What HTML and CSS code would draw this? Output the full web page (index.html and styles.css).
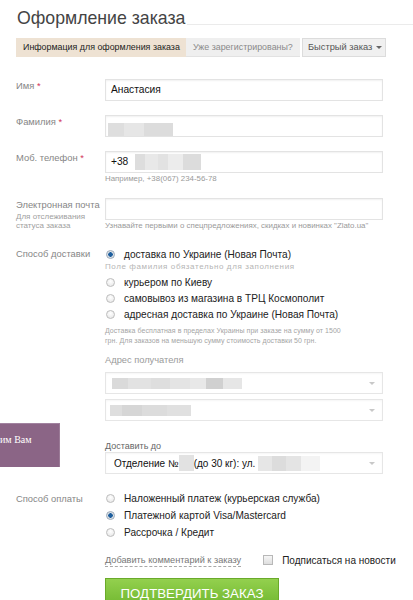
FILE: index.html
```html
<!DOCTYPE html>
<html lang="ru">
<head>
<meta charset="utf-8">
<title>Оформление заказа</title>
<link rel="stylesheet" href="styles.css">
</head>
<body>
<div class="page">
  <div class="title-row">
    <h1 class="title">Оформление заказа</h1>
    <span class="title-line"></span>
  </div>

  <div class="tabs">
    <div class="tab tab-active">Информация для оформления заказа</div>
    <div class="tab tab-login">Уже зарегистрированы?</div>
    <div class="tab tab-quick">Быстрый заказ <span class="caret"></span></div>
  </div>

  <div class="form">
    <div class="row">
      <div class="label">Имя <span class="req">*</span></div>
      <div class="field"><div class="input">Анастасия</div></div>
    </div>

    <div class="row">
      <div class="label">Фамилия <span class="req">*</span></div>
      <div class="field"><div class="input"><span class="blur blur-surname"></span></div></div>
    </div>

    <div class="row row-hint">
      <div class="label">Моб. телефон <span class="req">*</span></div>
      <div class="field">
        <div class="input">+38<span class="blur blur-phone"></span></div>
        <div class="hint">Например, +38(067) 234-56-78</div>
      </div>
    </div>

    <div class="row">
      <div class="label">Электронная почта<div class="sublabel">Для отслеживания<br>статуса заказа</div></div>
      <div class="field">
        <div class="input"></div>
        <div class="hint">Узнавайте первыми о спецпредложениях, скидках и новинках "Zlato.ua"</div>
      </div>
    </div>

    <div class="row row-delivery">
      <div class="label label-opt">Способ доставки</div>
      <div class="field">
        <div class="opt"><span class="radio checked"></span>доставка по Украине (Новая Почта)</div>
        <div class="opt-hint">Поле фамилия обязательно для заполнения</div>
        <div class="opt"><span class="radio"></span>курьером по Киеву</div>
        <div class="opt"><span class="radio"></span>самовывоз из магазина в ТРЦ Космополит</div>
        <div class="opt"><span class="radio"></span>адресная доставка по Украине (Новая Почта)</div>
        <div class="note">Доставка бесплатная в пределах Украины при заказе на сумму от 1500<br>грн. Для заказов на меньшую сумму стоимость доставки 50 грн.</div>

        <div class="sub-title">Адрес получателя</div>
        <div class="select"><span class="blur blur-city"></span><span class="arrow"></span></div>
        <div class="select select-second"><span class="blur blur-region"></span><span class="arrow"></span></div>

        <div class="deliver-label">Доставить до</div>
        <div class="select select-dark">Отделение №<span class="blur blur-num"></span> (до 30 кг): ул.<span class="blur blur-street"></span><span class="arrow"></span></div>
      </div>
    </div>

    <div class="row row-payment">
      <div class="label label-pay">Способ оплаты</div>
      <div class="field">
        <div class="opt opt-pay"><span class="radio"></span>Наложенный платеж (курьерская служба)</div>
        <div class="opt opt-pay"><span class="radio checked"></span>Платежной картой Visa/Mastercard</div>
        <div class="opt opt-pay"><span class="radio"></span>Рассрочка / Кредит</div>
      </div>
    </div>

    <div class="offset extras">
      <span class="comment-link">Добавить комментарий к заказу</span>
      <span class="checkbox"></span>
      <span class="subscribe">Подписаться на новости</span>
    </div>

    <div class="offset">
      <div class="submit">ПОДТВЕРДИТЬ ЗАКАЗ</div>
    </div>
  </div>
</div>

<div class="callback">им Вам</div>
</body>
</html>
```

FILE: styles.css
```css
html, body {
  margin: 0;
  padding: 0;
  background: #fff;
}

body {
  font-family: "Liberation Sans", Arial, sans-serif;
  color: #333;
  overflow: hidden;
  height: 600px;
}

.page {
  padding-left: 16px;
}

.title-row {
  display: flex;
  padding-top: 6px;
}

.title {
  margin: 0 0 0 1px;
  font-weight: normal;
  font-size: 17.7px;
  line-height: 24px;
  color: #444;
  white-space: nowrap;
}

.title-line {
  flex: 1;
  height: 1px;
  margin-top: 18px;
  margin-left: 2px;
  background: #ebebeb;
}

.tabs {
  display: flex;
  margin-top: 8px;
  height: 19px;
  font-size: 8.9px;
  line-height: 19px;
}

.tab {
  box-sizing: border-box;
  height: 19px;
  white-space: nowrap;
}

.tab-active {
  width: 170px;
  padding-left: 7px;
  background: #eee2d3;
  color: #222;
}

.tab-login {
  width: 114px;
  padding-left: 7px;
  background: #efefef;
  color: #8a8a8a;
  border-bottom: 1px solid #e2e2e2;
}

.tab-quick {
  width: 84px;
  margin-left: 2px;
  padding-left: 5px;
  background: #f0f0f0;
  color: #555;
  border: 1px solid #dcdcdc;
  line-height: 17px;
  font-size: 9.3px;
}

.caret {
  display: inline-block;
  width: 0;
  height: 0;
  border-left: 3px solid transparent;
  border-right: 3px solid transparent;
  border-top: 3px solid #666;
  vertical-align: middle;
  margin-left: 1px;
}

.form {
  margin-top: 22px;
}

.row {
  display: grid;
  grid-template-columns: 89px 278px;
  margin-bottom: 14px;
}

.row-hint {
  margin-bottom: 13px;
}

.label {
  font-size: 9.4px;
  line-height: 14px;
  color: #868686;
  white-space: nowrap;
}

.req {
  color: #d2335a;
}

.sublabel {
  font-size: 8px;
  line-height: 9px;
  color: #a0a0a0;
}

.input {
  box-sizing: border-box;
  height: 22px;
  border: 1px solid #e3e3e3;
  box-shadow: inset 0 1px 2px rgba(0, 0, 0, 0.06);
  padding: 0 5px;
  font-size: 10.2px;
  line-height: 20px;
  color: #111;
  display: flex;
  align-items: center;
}

.hint {
  font-size: 7.9px;
  line-height: 12px;
  color: #9a9a9a;
  white-space: nowrap;
}

.blur {
  display: inline-block;
  flex: none;
}

.blur-surname {
  width: 65px;
  height: 13px;
  margin-left: -3px;
  margin-top: 6px;
  background: linear-gradient(90deg, #dedede 0 25%, #e6e6e6 25% 55%, #dcdcdc 55% 100%);
}

.blur-phone {
  width: 66px;
  height: 16px;
  margin-left: 7px;
  background: linear-gradient(90deg, #dddddd 0 15%, #e8e8e8 15% 35%, #e2e2e2 35% 50%, #ececec 50% 72%, #dcdcdc 72% 100%);
}

.row-delivery {
  margin-bottom: 0;
}

.label-opt {
  line-height: 16px;
}

.opt {
  display: flex;
  align-items: center;
  height: 16px;
  font-size: 10.1px;
  color: #222;
  white-space: nowrap;
}

.opt-pay {
  height: 17px;
}

.radio {
  box-sizing: border-box;
  flex: none;
  width: 9px;
  height: 9px;
  margin-left: 1px;
  margin-right: 9px;
  border-radius: 50%;
  border: 1px solid #bdbdbd;
  background: radial-gradient(circle at 50% 35%, #ffffff 0, #e4e4e4 100%);
}

.radio.checked {
  border-color: #9aa9b8;
  background: radial-gradient(circle, #1e5f9e 0 2px, #d8dde3 2.5px, #f4f4f4 100%);
}

.opt-hint {
  font-size: 8px;
  line-height: 9px;
  letter-spacing: 0.6px;
  color: #b5b5b5;
  margin-bottom: 3px;
  white-space: nowrap;
}

.note {
  margin-top: 4px;
  font-size: 7px;
  line-height: 10px;
  letter-spacing: 0.05px;
  color: #a5a5a5;
  white-space: nowrap;
}

.sub-title {
  margin-top: 7px;
  font-size: 9.3px;
  line-height: 14px;
  color: #9a9a9a;
}

.select {
  box-sizing: border-box;
  height: 22px;
  margin-top: 5px;
  border: 1px solid #e6e6e6;
  box-shadow: inset 0 1px 2px rgba(0, 0, 0, 0.04);
  padding: 0 4px 0 6px;
  display: flex;
  align-items: center;
  font-size: 10px;
  color: #111;
  white-space: nowrap;
}

.arrow {
  margin-left: auto;
  margin-right: 3px;
  width: 0;
  height: 0;
  border-left: 3px solid transparent;
  border-right: 3px solid transparent;
  border-top: 3px solid #c8c8c8;
}

.blur-city {
  width: 130px;
  height: 11px;
  background: linear-gradient(90deg, #dadada 0 12%, #e2e2e2 12% 30%, #dedede 30% 45%, #e4e4e4 45% 60%, #e8e8e8 60% 72%, #d0d0d0 72% 85%, #e6e6e6 85% 100%);
}

.blur-region {
  width: 81px;
  height: 11px;
  margin-left: -2px;
  background: linear-gradient(90deg, #dedede 0 15%, #d6d6d6 15% 40%, #dcdcdc 40% 70%, #e0e0e0 70% 100%);
}

.deliver-label {
  margin-top: 19px;
  font-size: 9px;
  line-height: 12px;
  color: #666;
}

.select-dark {
  margin-top: 0;
  padding-left: 8px;
  font-size: 10px;
}

.blur-num {
  width: 15px;
  height: 16px;
  background: #e2e2e2;
}

.blur-street {
  width: 62px;
  height: 15px;
  margin-left: 3px;
  background: linear-gradient(90deg, #e6e6e6 0 22%, #dcdcdc 22% 45%, #e4e4e4 45% 70%, #f3f3f3 70% 100%);
}

.row-payment {
  margin-top: 16px;
  margin-bottom: 0;
}

.label-pay {
  line-height: 17px;
}

.offset {
  padding-left: 89px;
}

.extras {
  display: flex;
  align-items: center;
  margin-top: 12px;
  height: 14px;
  white-space: nowrap;
}

.comment-link {
  font-size: 9.2px;
  line-height: 12px;
  color: #777;
  border-bottom: 1px dashed #a8a8a8;
}

.checkbox {
  box-sizing: border-box;
  flex: none;
  width: 10px;
  height: 10px;
  margin-left: 22px;
  border: 1px solid #b8b8b8;
  background: linear-gradient(#f6f6f6, #dedede);
}

.subscribe {
  margin-left: 9px;
  font-size: 10px;
  color: #222;
}

.submit {
  box-sizing: border-box;
  width: 174px;
  height: 32px;
  margin-top: 11px;
  border: 1px solid #6aaa2a;
  background: linear-gradient(#93d04e, #6db52c);
  color: #fff;
  font-size: 13.3px;
  line-height: 30px;
  text-align: center;
}

.callback {
  position: absolute;
  left: 0;
  top: 423px;
  width: 60px;
  height: 44px;
  box-sizing: border-box;
  background: #8b6586;
  border-top: 1px solid #a283a0;
  border-right: 1px solid #9b7b97;
  color: #fff;
  font-family: "Liberation Serif", "Times New Roman", serif;
  font-size: 10px;
  line-height: 12px;
  padding-top: 10px;
  white-space: nowrap;
}
```
